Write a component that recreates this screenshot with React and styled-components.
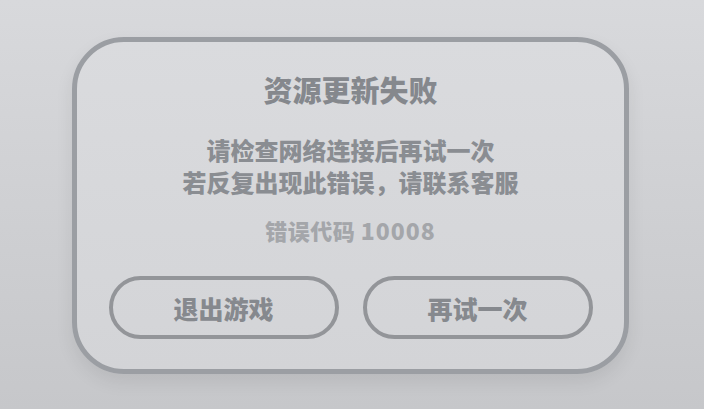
import React from "react";
import styled, { createGlobalStyle } from "styled-components";

const GlobalStyle = createGlobalStyle`
  html, body {
    margin: 0;
    height: 100%;
  }
  body {
    background: linear-gradient(180deg, #d8d9dc 0%, #c6c7ca 100%);
    font-family: "Noto Sans CJK SC", "Noto Sans", sans-serif;
  }
  #root {
    height: 100%;
  }
`;

const Screen = styled.div`
  height: 409px;
  display: flex;
  justify-content: center;
  padding: 37px 4px 0 0;
  box-sizing: border-box;
`;

const Dialog = styled.div`
  width: 557px;
  height: 337px;
  box-sizing: border-box;
  border: 5px solid #9b9ea3;
  border-radius: 52px;
  background: linear-gradient(180deg, #dadbde 0%, #d3d4d7 100%);
  box-shadow: 0 8px 18px rgba(0, 0, 0, 0.08);
  padding: 27px 31px 0 32px;
  display: flex;
  flex-direction: column;
  align-items: center;
`;

const Title = styled.h1`
  margin: 0;
  font-size: 29px;
  line-height: 40px;
  font-weight: 900;
  color: #85888d;
`;

const Message = styled.p`
  margin: 25px 0 0;
  font-size: 24px;
  line-height: 32px;
  font-weight: 900;
  color: #8a8d92;
  text-align: center;
`;

const Code = styled.div`
  margin-top: 17px;
  font-size: 22px;
  line-height: 30px;
  font-weight: 900;
  color: #a4a6aa;
  letter-spacing: 0.5px;
`;

const Digits = styled.span`
  font-size: 23px;
  letter-spacing: 1px;
`;

const Actions = styled.div`
  margin-top: 31px;
  width: 100%;
  display: flex;
  justify-content: space-between;
`;

const Button = styled.button`
  width: 230px;
  height: 63px;
  box-sizing: border-box;
  border: 4px solid #939599;
  border-radius: 32px;
  background: transparent;
  font-family: inherit;
  font-size: 25px;
  font-weight: 900;
  color: #86898e;
  cursor: pointer;
`;

export default function App() {
  return (
    <>
      <GlobalStyle />
      <Screen>
        <Dialog>
          <Title>资源更新失败</Title>
          <Message>
            请检查网络连接后再试一次
            <br />
            若反复出现此错误，请联系客服
          </Message>
          <Code>
            错误代码 <Digits>10008</Digits>
          </Code>
          <Actions>
            <Button>退出游戏</Button>
            <Button>再试一次</Button>
          </Actions>
        </Dialog>
      </Screen>
    </>
  );
}
